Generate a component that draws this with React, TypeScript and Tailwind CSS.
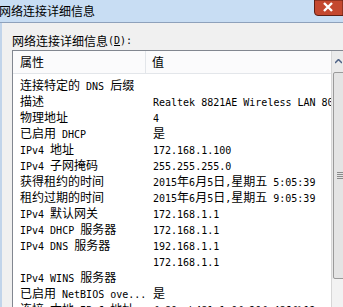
import React from "react";

const CJK = /[\u3000-\u30ff\u4e00-\u9fff\uff00-\uffef]/;

// split a string into CJK / latin runs, each with its own font
function Txt({ s }: { s: string }) {
  const runs: { cjk: boolean; t: string }[] = [];
  for (const ch of s) {
    const c = CJK.test(ch);
    const last = runs[runs.length - 1];
    if (last && last.cjk === c) last.t += ch;
    else runs.push({ cjk: c, t: ch });
  }
  return (
    <>
      {runs.map((r, i) =>
        r.cjk ? (
          <span key={i} className="font-['Noto_Sans_CJK_SC',sans-serif] text-[12px]">
            {r.t}
          </span>
        ) : (
          <span key={i} className="font-['DejaVu_Sans_Mono',monospace] text-[10px] whitespace-pre">
            {r.t}
          </span>
        )
      )}
    </>
  );
}

const rows: [string, string][] = [
  ["连接特定的 DNS 后缀", ""],
  ["描述", "Realtek 8821AE Wireless LAN 802.11ac PCI-E NIC"],
  ["物理地址", "4"],
  ["已启用 DHCP", "是"],
  ["IPv4 地址", "172.168.1.100"],
  ["IPv4 子网掩码", "255.255.255.0"],
  ["获得租约的时间", "2015年6月5日,星期五 5:05:39"],
  ["租约过期的时间", "2015年6月5日,星期五 9:05:39"],
  ["IPv4 默认网关", "172.168.1.1"],
  ["IPv4 DHCP 服务器", "172.168.1.1"],
  ["IPv4 DNS 服务器", "192.168.1.1"],
  ["", "172.168.1.1"],
  ["IPv4 WINS 服务器", ""],
  ["已启用 NetBIOS ove...", "是"],
  ["连接-本地 IPv6 地址", "fe80::b481:1c0f:20f:486f%12"],
];

export default function App() {
  return (
    <div className="w-[343px] h-[307px] overflow-hidden bg-[#f0f0f0] flex flex-col text-black">
      {/* title bar */}
      <div className="h-[23px] shrink-0 flex items-start border-b border-[#8ea1bb] bg-[#c8ddf3]">
        <div className="flex-1 h-[22px] flex items-center -ml-[1px] leading-none">
          <Txt s="网络连接详细信息" />
        </div>
        <svg width="29" height="16" viewBox="0 0 29 16" className="shrink-0 block">
          <path d="M0.5 0 V12 Q0.5 15.5 4 15.5 H29 V0 Z" fill="#c4482f" stroke="#5e1f14" strokeWidth="1" />
          <path d="M10 3 L18 11 M18 3 L10 11" stroke="#ffffff" strokeWidth="2.4" />
        </svg>
      </div>

      {/* body */}
      <div className="flex-1 flex flex-col border-l-2 border-[#c1d4ea] pt-[11px]">
        <div className="h-[14px] flex items-center ml-[10px] leading-none">
          <Txt s="网络连接详细信息(" />
          <span className="font-['DejaVu_Sans_Mono',monospace] text-[10px] underline">D</span>
          <Txt s="):" />
        </div>

        <div className="mt-[2px] ml-[10px] w-[337px] flex-1 border border-[#828790] bg-white flex">
          <div className="flex-1 flex flex-col min-w-0">
            {/* header */}
            <div className="h-[23px] shrink-0 flex border-b border-[#e3e6ea] bg-[#fbfbfc]">
              <div className="w-[133px] flex items-center pl-[7px] border-r border-[#e3e6ea] leading-none">
                <Txt s="属性" />
              </div>
              <div className="flex-1 flex items-center pl-[6px] leading-none">
                <Txt s="值" />
              </div>
            </div>
            <div className="pt-[2px] flex flex-col">
              {rows.map(([k, v], i) => (
                <div key={i} className="h-[16px] shrink-0 flex items-center leading-none">
                  <div className="w-[140px] shrink-0 pl-[7px] whitespace-nowrap">
                    <Txt s={k} />
                  </div>
                  <div className="flex-1 whitespace-nowrap overflow-hidden">
                    <Txt s={v} />
                  </div>
                </div>
              ))}
            </div>
          </div>

          {/* scrollbar */}
          <div className="w-[17px] shrink-0 flex flex-col bg-[#eaeaea] border-l border-[#d6d6d6]">
            <div className="h-[21px] flex items-center justify-center pr-[4px]">
              <svg width="7" height="5" viewBox="0 0 7 5">
                <path d="M0 4 L3.5 0.5 L7 4" stroke="#4d6185" strokeWidth="1.5" fill="none" />
              </svg>
            </div>
            <div className="h-[207px] mx-px border border-[#9a9a9a] rounded-[2px] bg-[#e4e4e4] flex items-center pl-[3px]">
              <div className="flex flex-col gap-[1px]">
                <div className="w-[6px] h-px bg-[#8b8b8b]" />
                <div className="w-[6px] h-px bg-[#8b8b8b]" />
                <div className="w-[6px] h-px bg-[#8b8b8b]" />
                <div className="w-[6px] h-px bg-[#8b8b8b]" />
              </div>
            </div>
            <div className="flex-1 bg-[#f2f2f2]" />
          </div>
        </div>
      </div>
    </div>
  );
}
